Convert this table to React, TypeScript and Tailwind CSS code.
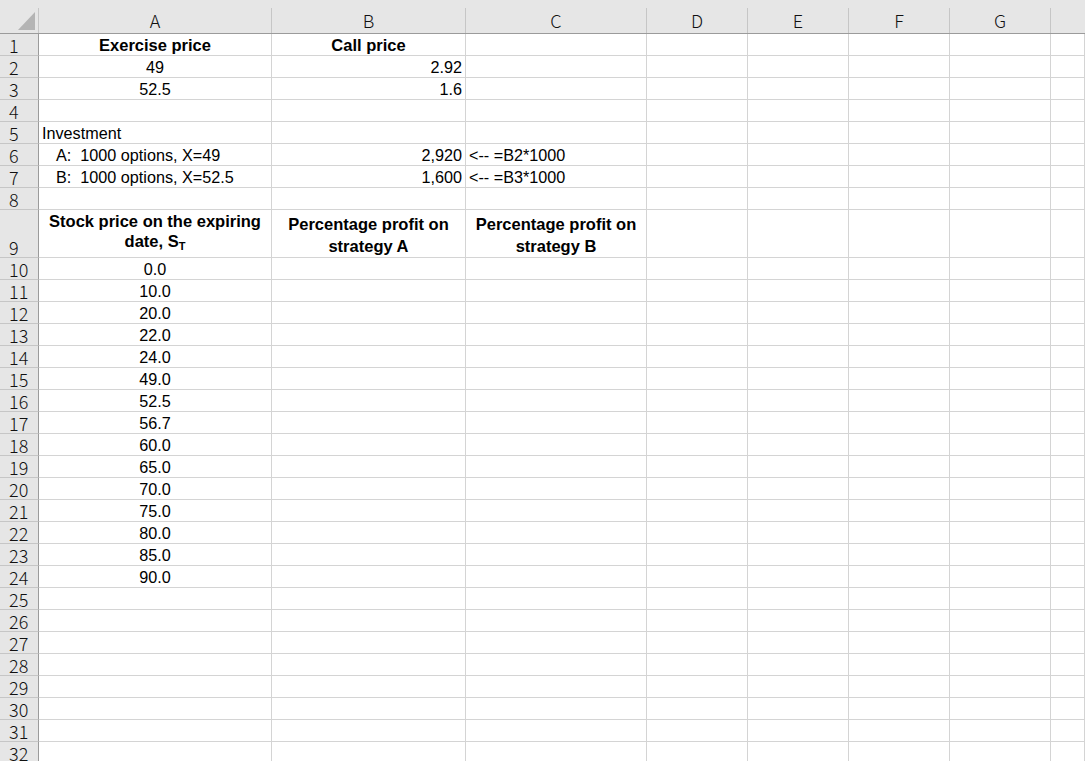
import React from "react";

const cols = ["A", "B", "C", "D", "E", "F", "G", "H"];
const widths = ["w-[233px]", "w-[194px]", "w-[181px]", "w-[101px]", "w-[101px]", "w-[101px]", "w-[101px]", "flex-1"];

type Cell = { text?: React.ReactNode; align?: "left" | "center" | "right"; bold?: boolean; pl?: string };

const prices = ["0.0", "10.0", "20.0", "22.0", "24.0", "49.0", "52.5", "56.7", "60.0", "65.0", "70.0", "75.0", "80.0", "85.0", "90.0"];

const rows: Record<number, Cell[]> = {
  1: [{ text: "Exercise price", align: "center", bold: true }, { text: "Call price", align: "center", bold: true }],
  2: [{ text: "49", align: "center" }, { text: "2.92", align: "right" }],
  3: [{ text: "52.5", align: "center" }, { text: "1.6", align: "right" }],
  5: [{ text: "Investment", align: "left" }],
  6: [{ text: "A:  1000 options, X=49", align: "left", pl: "pl-[17px]" }, { text: "2,920", align: "right" }, { text: "<-- =B2*1000", align: "left" }],
  7: [{ text: "B:  1000 options, X=52.5", align: "left", pl: "pl-[17px]" }, { text: "1,600", align: "right" }, { text: "<-- =B3*1000", align: "left" }],
};
prices.forEach((p, i) => {
  rows[10 + i] = [{ text: p, align: "center" }];
});

function DataCell({ cell, w }: { cell?: Cell; w: string }) {
  const align = cell?.align ?? "left";
  return (
    <div
      className={`${w} shrink-0 h-full border-r border-b border-[#d4d4d4] flex items-end pb-[1px] overflow-visible whitespace-pre leading-[18px] text-black ${
        align === "center" ? "justify-center" : align === "right" ? "justify-end pr-[3px]" : "justify-start pl-[3px]"
      } ${cell?.bold ? "font-bold text-[16.5px]" : "text-[16.2px]"} ${cell?.pl ?? ""}`}
    >
      {cell?.text}
    </div>
  );
}

function RowHead({ n }: { n: number }) {
  return (
    <div className="w-[39px] shrink-0 h-full bg-[#e6e6e6] border-r border-b border-r-[#9b9b9b] border-b-[#c6c6c6] flex items-end pl-[9px] pb-[1px] text-[18px] leading-[18px] font-light text-[#111] [font-family:'Noto_Sans_CJK_SC','Noto_Sans',sans-serif]">
      {n}
    </div>
  );
}

function HeadCell({ text, w }: { text: string; w: string }) {
  return (
    <div className={`${w} shrink-0 h-full border-r border-b border-[#d4d4d4] flex items-end justify-center text-center font-bold text-[16.5px] leading-[22px] text-black`}>
      <div>{text.split("|").map((t, i) => (i ? [<br key={i} />, t] : t))}</div>
    </div>
  );
}

export default function App() {
  const rowNums = Array.from({ length: 32 }, (_, i) => i + 1);
  return (
    <div className="w-[1085px] h-[761px] overflow-hidden bg-white [font-family:'Liberation_Sans',Arial,sans-serif]">
      {/* column headers */}
      <div className="flex h-[34px] pt-[8px] bg-[#e6e6e6] border-b border-[#9b9b9b]">
        <div className="relative w-[39px] shrink-0 h-full border-r border-[#c6c6c6]">
          <svg className="absolute left-[18px] top-[4px]" width="17" height="18" viewBox="0 0 17 18">
            <polygon points="17,0 17,18 0,18" fill="#b4b4b4" />
          </svg>
        </div>
        {cols.map((c, i) => (
          <div
            key={c}
            className={`${widths[i]} shrink-0 h-full ${i < 7 ? "border-r border-[#c6c6c6]" : ""} flex items-center justify-center text-[18px] font-light text-[#111] [font-family:'Noto_Sans_CJK_SC','Noto_Sans',sans-serif]`}
          >
            {c !== "H" ? c : ""}
          </div>
        ))}
      </div>

      {rowNums.map((n) => {
        if (n === 9) {
          return (
            <div key={n} className="flex h-[48px]">
              <RowHead n={n} />
              <div className="w-[233px] shrink-0 h-full border-r border-b border-[#d4d4d4] flex items-end justify-center pb-[6px] text-center font-bold text-[16.5px] leading-[20px] text-black">
                <div>
                  Stock price on the expiring
                  <br />
                  date, S<span className="relative top-[3px] text-[11px] leading-none">T</span>
                </div>
              </div>
              <HeadCell w="w-[194px]" text="Percentage profit on|strategy A" />
              <HeadCell w="w-[181px]" text="Percentage profit on|strategy B" />
              {widths.slice(3).map((w, i) => (
                <DataCell key={i} w={w} />
              ))}
            </div>
          );
        }
        const cells = rows[n] ?? [];
        return (
          <div key={n} className="flex h-[22px]">
            <RowHead n={n} />
            {widths.map((w, i) => (
              <DataCell key={i} w={w} cell={cells[i]} />
            ))}
          </div>
        );
      })}
    </div>
  );
}
